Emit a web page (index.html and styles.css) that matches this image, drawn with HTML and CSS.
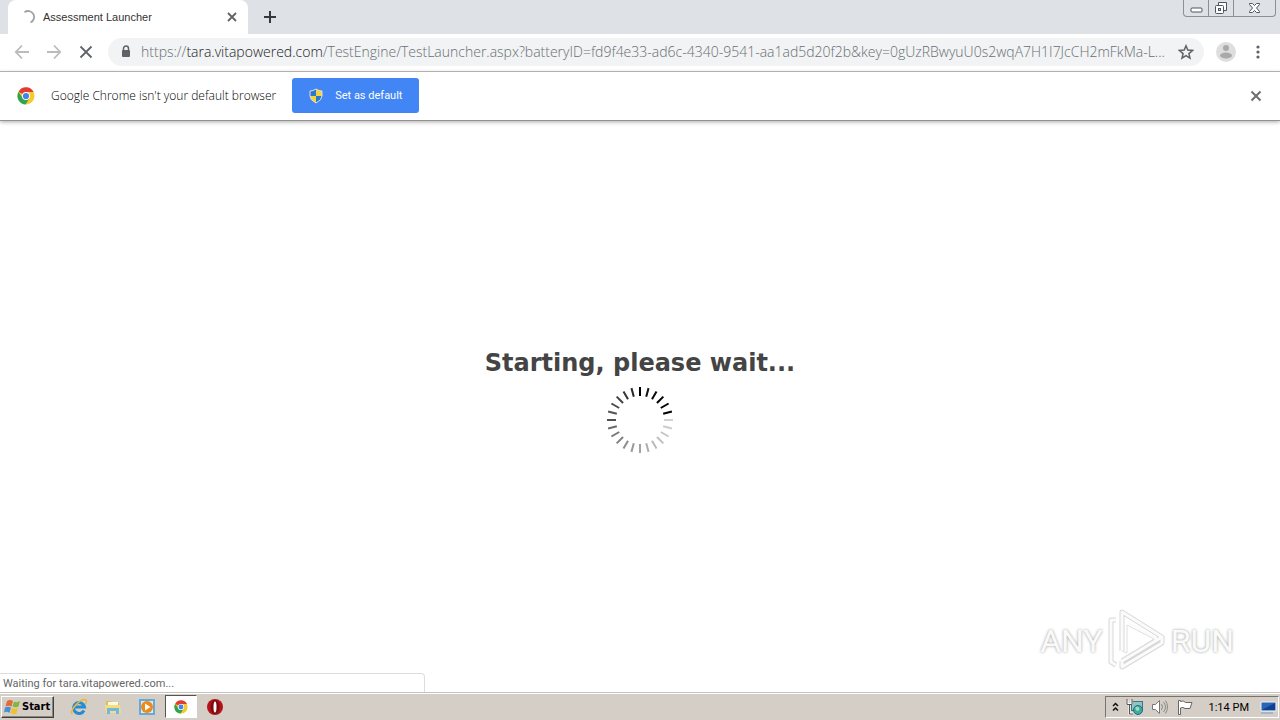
FILE: index.html
```html
<!DOCTYPE html>
<html lang="en">
<head>
<meta charset="utf-8">
<title>Assessment Launcher</title>
<link rel="stylesheet" href="styles.css">
</head>
<body>
<header class="browser">
  <div class="tabstrip">
    <div class="tab">
      <svg class="tab-spinner" width="14" height="14" viewBox="0 0 14 14"><path d="M3.500 2.200A6 6 0 1 1 9.500 12.500" fill="none" stroke="#a0a3a7" stroke-width="1.800"/></svg>
      <span class="tab-title">Assessment Launcher</span>
      <button class="icon-btn" aria-label="Close tab"><svg width="10" height="10" viewBox="0 0 10 10"><path d="M1 1l8 8M9 1L1 9" stroke="#5f6368" stroke-width="1.800"/></svg></button>
    </div>
    <button class="icon-btn new-tab" aria-label="New tab"><svg width="12" height="12" viewBox="0 0 12 12"><path d="M6 0v12M0 6h12" stroke="#35383d" stroke-width="2"/></svg></button>
    <div class="window-controls">
      <button class="win-btn" aria-label="Minimize"><svg width="13" height="6" viewBox="0 0 13 6"><rect x="1" y="1" width="11" height="4" rx="1" fill="#fff" stroke="#50545d"/></svg></button>
      <button class="win-btn" aria-label="Restore"><svg width="14" height="14" viewBox="0 0 14 14"><path d="M4.500 4V1.500h8v8H10" fill="#fff" stroke="#50545d"/><rect x="1.500" y="4.500" width="8" height="8" rx="1" fill="#fff" stroke="#50545d"/><rect x="4.500" y="7.500" width="2" height="2" fill="#dee1e6" stroke="#50545d"/></svg></button>
      <button class="win-btn win-close" aria-label="Close"><svg width="13" height="12" viewBox="0 0 13 12"><path d="M1.500 1.500h3l2 2 2-2h3v1L8.500 6l3 3.500v1h-3l-2-2-2 2h-3v-1l3-3.500-3-3.500z" fill="#fff" stroke="#50545d"/></svg></button>
    </div>
  </div>
  <div class="toolbar">
    <button class="icon-btn nav" aria-label="Back"><svg width="16" height="16" viewBox="0 0 16 16"><path d="M15 8H2M8 1.500L1.800 8 8 14.500" fill="none" stroke="#b9bbbd" stroke-width="1.800"/></svg></button>
    <button class="icon-btn nav" aria-label="Forward"><svg width="16" height="16" viewBox="0 0 16 16"><path d="M1 8h13M8 1.500L14.200 8 8 14.500" fill="none" stroke="#b9bbbd" stroke-width="1.800"/></svg></button>
    <button class="icon-btn nav" aria-label="Stop"><svg width="14" height="14" viewBox="0 0 14 14"><path d="M1.500 1.500l11 11M12.500 1.500l-11 11" stroke="#5f6368" stroke-width="1.800"/></svg></button>
    <div class="omnibox">
      <svg class="lock" width="10" height="14" viewBox="0 0 10 14"><path d="M2.500 6V3.500a2.500 2.500 0 0 1 5 0V6" fill="none" stroke="#5f6368" stroke-width="1.500"/><rect x="1" y="5" width="8" height="7" rx="1" fill="#5f6368"/></svg>
      <div class="url">https://<span class="host">tara.vitapowered.com</span>/TestEngine/TestLauncher.aspx?batteryID=fd9f4e33-ad6c-4340-9541-aa1ad5d20f2b&amp;key=0gUzRBwyuU0s2wqA7H1I7JcCH2mFkMa-L...</div>
      <button class="icon-btn" aria-label="Bookmark"><svg width="16" height="16" viewBox="0 0 16 16"><path d="M8 1.800l1.800 4.300 4.700.4-3.600 3.100 1.100 4.600L8 11.700l-4 2.500 1.100-4.600L1.500 6.500l4.700-.4z" fill="none" stroke="#5f6368" stroke-width="1.500"/></svg></button>
    </div>
    <button class="icon-btn avatar" aria-label="Profile"><svg width="20" height="20" viewBox="0 0 20 20"><circle cx="10" cy="10" r="10" fill="#dedede"/><circle cx="10" cy="6" r="3" fill="#a9a9a9"/><ellipse cx="10" cy="13.500" rx="6" ry="3" fill="#a9a9a9"/></svg></button>
    <button class="icon-btn menu" aria-label="Menu"><svg width="4" height="14" viewBox="0 0 4 14"><g fill="#5f6368"><circle cx="2" cy="2" r="1.600"/><circle cx="2" cy="7" r="1.600"/><circle cx="2" cy="12" r="1.600"/></g></svg></button>
  </div>
  <div class="infobar">
    <svg class="chrome-logo" width="18" height="18" viewBox="0 0 18 18"><use href="#chrome"/></svg>
    <span class="info-text">Google Chrome isn't your default browser</span>
    <button class="default-btn">
      <svg width="14" height="16" viewBox="0 0 14 16"><path d="M7 1Q4 3 1 3v5q0 4 6 7z" fill="#f5d33f"/><path d="M7 1q3 2 6 2v5q0 4-6 7z" fill="#f5d33f"/><path d="M7 1Q4 3 1 3v5h6z" fill="#2d78cf"/><path d="M7 8h6q0 4-6 7z" fill="#2d78cf"/><path d="M7 1Q4 3 1 3v5q0 4 6 7 6-3 6-7V3Q10 3 7 1z" fill="none" stroke="#d8dfd8"/></svg>
      <span>Set as default</span>
    </button>
    <button class="icon-btn info-close" aria-label="Dismiss"><svg width="12" height="12" viewBox="0 0 12 12"><path d="M1.500 1.500l9 9M10.500 1.500l-9 9" stroke="#6b6e72" stroke-width="2"/></svg></button>
  </div>
</header>
<main class="page">
  <h1 class="message">Starting, please wait...</h1>
  <svg class="loader" width="68" height="68" viewBox="-34 -34 68 68" stroke-width="2">
    <defs><path id="tick" d="M0-24v-9"/></defs>
    <use href="#tick" stroke="#000"/><use href="#tick" stroke="#111" transform="rotate(15)"/><use href="#tick" stroke="#080808" transform="rotate(30)"/><use href="#tick" stroke="#000" transform="rotate(45)"/><use href="#tick" stroke="#000" transform="rotate(60)"/><use href="#tick" stroke="#000" transform="rotate(75)"/>
    <use href="#tick" stroke="#d2d2d2" transform="rotate(90)"/><use href="#tick" stroke="#ccc" transform="rotate(105)"/><use href="#tick" stroke="#c6c6c6" transform="rotate(120)"/><use href="#tick" stroke="#c0c0c0" transform="rotate(135)"/><use href="#tick" stroke="#bababa" transform="rotate(150)"/><use href="#tick" stroke="#aeaeae" transform="rotate(165)"/>
    <use href="#tick" stroke="#a2a2a2" transform="rotate(180)"/><use href="#tick" stroke="#999" transform="rotate(195)"/><use href="#tick" stroke="#8d8d8d" transform="rotate(210)"/><use href="#tick" stroke="#828282" transform="rotate(225)"/><use href="#tick" stroke="#777" transform="rotate(240)"/><use href="#tick" stroke="#6b6b6b" transform="rotate(255)"/>
    <use href="#tick" stroke="#505050" transform="rotate(270)"/><use href="#tick" stroke="#555" transform="rotate(285)"/><use href="#tick" stroke="#4b4b4b" transform="rotate(300)"/><use href="#tick" stroke="#404040" transform="rotate(315)"/><use href="#tick" stroke="#333" transform="rotate(330)"/><use href="#tick" stroke="#262626" transform="rotate(345)"/>
  </svg>
  <div class="watermark">
    <span>ANY</span>
    <svg width="60" height="66" viewBox="0 0 60 66"><g fill="none" stroke-linejoin="round"><g stroke="#d8d8d8" stroke-width="5"><path d="M15 43V4l40 25-40 24M9 12H4v42l5 3M15 53v6l40-24v-6"/></g><g stroke="#fbfbfb" stroke-width="3"><path d="M15 43V4l40 25-40 24M9 12H4v42l5 3M15 53v6l40-24v-6M21 14l30 18"/></g><path d="M15 43l5 2V17l27 14-32 20" stroke="#e0e0e0"/></g></svg>
    <span>RUN</span>
  </div>
  <div class="status">Waiting for tara.vitapowered.com...</div>
</main>
<footer class="taskbar">
  <button class="start"><svg width="17" height="16" viewBox="0 0 17 16"><path d="M3 2q3-2 6 0L7.500 7.500q-3-1.500-6 0z" fill="#e56a36"/><path d="M10 2.500q3 1.500 6-.5L14.500 7.500q-3 1.500-6 0z" fill="#83b641"/><path d="M1 8.500q3-1.500 6 0L5.500 14Q3 12 0 13.500z" fill="#4790d5"/><path d="M8 9q3 1.500 6 0l-1.500 5.500q-3 1.500-6-.5z" fill="#f0c12e"/></svg>Start</button>
  <nav class="quick">
    <button class="task" aria-label="Internet Explorer"><svg width="18" height="18" viewBox="0 0 18 18"><path d="M14 12.500A5.500 5.500 0 1 1 14.500 9H5" fill="none" stroke="#268bd2" stroke-width="3"/><path d="M2.500 16C-2 14 11-1 16 2q1 1-.5 4" fill="none" stroke="#e7b93b" stroke-width="1.500"/></svg></button>
    <button class="task" aria-label="Explorer"><svg width="18" height="18" viewBox="0 0 18 18"><path d="M2 3h5l1 2h7v10H2z" fill="#dfbd58"/><path d="M4 4h10v5H4z" fill="#fffbd9"/><path d="M1 7h15l1 8H2z" fill="#f4dc84"/><path d="M3 16v-6h12v6h-3v-3H6v3z" fill="#70b9dc"/></svg></button>
    <button class="task" aria-label="Media Player"><svg width="18" height="18" viewBox="0 0 18 18"><rect x="1" y="1" width="16" height="16" fill="#67a9d9"/><path d="M3 3h12v12H3z" fill="#d8ecf7"/><circle cx="9" cy="9" r="6" fill="#ef8a16"/><path d="M7 5.500L12.500 9 7 12.500z" fill="#fff"/></svg></button>
    <button class="task active" aria-label="Chrome"><svg width="14" height="14" viewBox="0 0 18 18"><defs><g id="chrome"><circle cx="9" cy="9" r="8.500" fill="#f7c92f"/><path d="M9 9L1.600 4.700A8.500 8.500 0 0 1 16.600 5H9z" fill="#e23d32"/><path d="M9 9L5.500 11 1.600 4.700A8.500 8.500 0 0 0 8.500 17.500L12.500 11z" fill="#2fa451"/><circle cx="9" cy="9" r="4" fill="#fff"/><circle cx="9" cy="9" r="3.100" fill="#4285e8"/></g></defs><use href="#chrome"/></svg></button>
    <button class="task" aria-label="Opera"><svg width="18" height="18" viewBox="0 0 18 18"><circle cx="9" cy="9" r="8" fill="#b31318"/><ellipse cx="9" cy="9" rx="4.500" ry="7" fill="#7d0a0e"/><ellipse cx="9" cy="9" rx="1.500" ry="5.500" fill="#fff"/></svg></button>
  </nav>
  <div class="tray">
    <svg width="7" height="10" viewBox="0 0 7 10"><path d="M1 4l2.500-2.500L6 4M1 8.500L3.500 6 6 8.500" fill="none" stroke="#111" stroke-width="1.500"/></svg>
    <svg width="18" height="16" viewBox="0 0 18 16"><rect x="5.500" y="2.500" width="11" height="9" fill="#8dc4cc" stroke="#467477"/><path d="M1.500 1v4h4V1M3.500 5v9.500H7" fill="none" stroke="#fff" stroke-width="2"/><path d="M1 0v5.500h5V0M3.500 5v10H7" fill="none" stroke="#555"/><circle cx="12" cy="11" r="4.500" fill="#3daaa5" stroke="#216f79"/><path d="M9 9q3-3 4 0t-2 3z" fill="#a1dfb2"/></svg>
    <svg width="18" height="16" viewBox="0 0 18 16"><path d="M1.500 5.500h3l4-4v13l-4-4h-3z" fill="#fff" stroke="#777"/><path d="M10.500 5q2 3 0 6M12.500 3q4 5 0 10M14.500 1.500q4 6.500 0 13" fill="none" stroke="#8b8b8b"/></svg>
    <svg width="18" height="16" viewBox="0 0 18 16"><path d="M2.500 15.500v-14h2v1q3-1.500 5 1h6.500l-2 6H9q-2-2-4.500-.5v6.500z" fill="#fff" stroke="#666"/></svg>
    <time class="clock">1:14 PM</time>
    <svg width="17" height="15" viewBox="0 0 17 15"><path d="M1 2h15v9H1z" fill="#2865b5" stroke="#eef3f8"/><path d="M2 10L15 3v7z" fill="#123f91"/><path d="M1 13h12" stroke="#789ac2"/></svg>
  </div>
</footer>
</body>
</html>
```
FILE: styles.css
```css
* { box-sizing: border-box; }
body {
  margin: 0;
  min-height: 100vh;
  display: flex;
  flex-direction: column;
  background: #fff;
  font-family: Roboto, "Open Sans", sans-serif;
  font-size: 11px;
  color: #333;
}
button { font: inherit; margin: 0; border: 0; padding: 0; background: none; color: inherit; }
svg { display: block; flex: none; }
.icon-btn { display: flex; align-items: center; justify-content: center; flex: none; }
.tabstrip { display: flex; height: 34px; padding-left: 8px; background: #dee1e6; }
.tab {
  display: flex;
  align-items: center;
  width: 240px;
  padding: 0 11px 0 13px;
  background: #fff;
  border-radius: 8px 8px 0 0;
}
.tab-title { flex: 1; margin-left: 8px; font-family: "Liberation Sans", Arial, sans-serif; }
.new-tab { width: 44px; }
.window-controls {
  display: flex;
  height: 17px;
  margin-left: auto;
  margin-right: 4px;
  border: 1px solid #8b8f98;
  border-top: 0;
  border-radius: 0 0 4px 4px;
}
.win-btn { display: flex; width: 25px; align-items: center; justify-content: center; border-right: 1px solid #8b8f98; }
.win-btn:first-child { align-items: flex-end; padding-bottom: 3px; }
.win-close { width: 41px; border-right: 0; }
.toolbar { display: flex; align-items: center; height: 38px; padding: 0 8px 1px 6px; border-bottom: 1px solid #b2b2b2; }
.nav { width: 32px; height: 32px; }
.omnibox {
  display: flex;
  align-items: center;
  flex: 1;
  min-width: 0;
  height: 28px;
  margin-left: 6px;
  padding: 0 10px 0 13px;
  border-radius: 14px;
  background: #f1f3f4;
}
.url { flex: 1; min-width: 0; margin-left: 10px; overflow: hidden; white-space: nowrap; font-family: "Open Sans", sans-serif; font-size: 14px; font-weight: 300; line-height: 20px; color: #6a6e73; }
.host { color: #202124; }
.avatar { margin-left: 12px; }
.menu { width: 28px; margin-left: 8px; }
.infobar {
  position: relative;
  display: flex;
  align-items: center;
  height: 49px;
  padding: 0 18px 1px 17px;
  border-bottom: 1px solid #929292;
  box-shadow: 0 1px 4px #aaa;
}
.info-text { margin-left: 16px; font-family: "Open Sans", sans-serif; font-size: 12px; font-weight: 300; color: #000; }
.default-btn {
  display: flex;
  align-items: center;
  gap: 12px;
  height: 35px;
  margin-left: 16px;
  padding: 0 17px;
  border-radius: 3px;
  background: #4285f4;
  color: #fff;
}
.info-close { margin-left: auto; }
.page { position: relative; flex: 1; display: flex; flex-direction: column; align-items: center; padding-top: 225px; }
.message { margin: 0 0 6px; font: bold 24px/34px "DejaVu Sans", Verdana, sans-serif; color: #444; }
.status {
  position: absolute;
  left: 0;
  bottom: 0;
  width: 425px;
  height: 19px;
  padding-left: 3px;
  border: 1px solid #ddd;
  border-left: 0;
  border-bottom: 0;
  border-radius: 0 4px 0 0;
  line-height: 19px;
  color: #666;
}
.watermark {
  position: absolute;
  right: 46px;
  bottom: 18px;
  display: flex;
  align-items: center;
  gap: 4px;
  font: 32px/48px Roboto, sans-serif;
  color: #fafafa;
  text-shadow: 0 0 3px #999;
}
.taskbar {
  display: flex;
  height: 28px;
  padding: 2px 0 1px 1px;
  border-top: 1px solid #c4c2bd;
  box-shadow: inset 0 1px #fff;
  background: #d5cec6;
}
.start {
  display: flex;
  align-items: center;
  gap: 1px;
  height: 22px;
  padding: 0 3px 0 2px;
  margin-top: 1px;
  border: 1px solid;
  border-color: #fff #404040 #404040 #fff;
  box-shadow: inset -1px -1px #8a857e;
  font: bold 11px/16px "DejaVu Sans Condensed", "DejaVu Sans", sans-serif;
  color: #000;
}
.quick { display: flex; gap: 2px; margin-left: 9px; }
.task { display: flex; align-items: center; justify-content: center; width: 32px; height: 23px; }
.active { border: 1px solid; border-color: #555 #fff #fff #555; background: #fff; }
.tray {
  display: flex;
  align-items: center;
  gap: 7px;
  height: 22px;
  margin: 1px 1px 0 auto;
  padding: 0 1px 0 6px;
  border: 1px solid;
  border-color: #77736d #fff #fff #77736d;
}
.clock { margin: 0 4px 0 8px; color: #000; }
```
